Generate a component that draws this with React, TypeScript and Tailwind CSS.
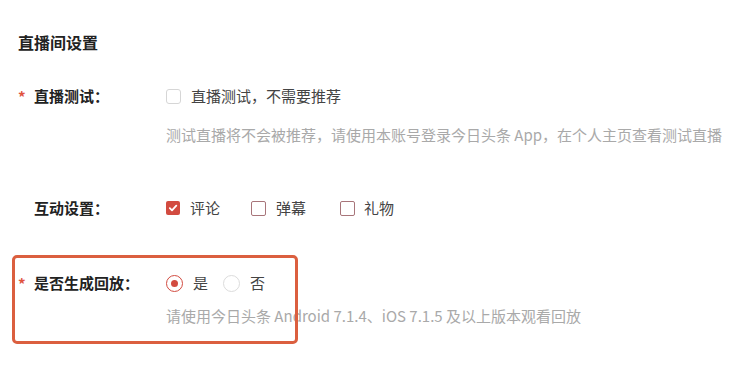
import React from 'react';

const font = { fontFamily: '"Noto Sans CJK SC", "Noto Sans", sans-serif' };

const Box = ({ checked, tone }: { checked?: boolean; tone: 'gray' | 'red' }) =>
    checked ? (
        <span className="w-[14px] h-[14px] rounded-[2px] bg-[#d24b40] flex items-center justify-center">
            <svg width="10" height="10" viewBox="0 0 10 10">
                <path d="M1.8 5.2 L4 7.3 L8.3 2.6" stroke="#fff" strokeWidth="1.8" fill="none" strokeLinecap="round" strokeLinejoin="round" />
            </svg>
        </span>
    ) : (
        <span
            className={
                tone === 'red'
                    ? 'w-[15px] h-[15px] rounded-[2px] border border-[#a8757a] bg-white'
                    : 'w-[15px] h-[15px] rounded-[3px] border border-[#d6d6d6] bg-white'
            }
        />
    );

const Radio = ({ on }: { on?: boolean }) =>
    on ? (
        <span className="w-[17px] h-[17px] rounded-full border-[1.5px] border-[#d24b40] flex items-center justify-center">
            <span className="w-[7px] h-[7px] rounded-full bg-[#d24b40]" />
        </span>
    ) : (
        <span className="w-[17px] h-[17px] rounded-full border border-[#dcdcdc]" />
    );

const Label = ({ text, required }: { text: string; required?: boolean }) => (
    <div className="w-[166px] flex items-center shrink-0">
        <span className="w-[16px] pl-[18px] box-content text-[#e0533f] text-[15px] font-bold leading-none">
            {required ? '*' : ''}
        </span>
        <span className="text-[15px] font-bold text-[#222]">{text}</span>
    </div>
);

export default function App() {
    return (
        <div className="relative w-[750px] h-[377px] bg-white overflow-hidden" style={font}>
            <div className="pt-[30px] pl-[18px] text-[16px] leading-[24px] font-semibold text-[#222]">直播间设置</div>

            <div className="mt-[30px] h-[24px] flex items-center">
                <Label text="直播测试：" required />
                <div className="flex items-center gap-[10px] text-[15px] text-[#444]">
                    <Box tone="gray" />
                    <span>直播测试，不需要推荐</span>
                </div>
            </div>
            <div className="mt-[16px] pl-[166px] text-[15px] leading-[22px] text-[#a9a9a9] whitespace-nowrap">
                测试直播将不会被推荐，请使用本账号登录今日头条 App，在个人主页查看测试直播
            </div>

            <div className="mt-[50px] h-[24px] flex items-center">
                <Label text="互动设置：" />
                <div className="flex items-center text-[15px] text-[#444]">
                    <div className="flex items-center gap-[10px] w-[85px]">
                        <Box checked tone="red" />
                        <span>评论</span>
                    </div>
                    <div className="flex items-center gap-[10px] w-[89px]">
                        <Box tone="red" />
                        <span>弹幕</span>
                    </div>
                    <div className="flex items-center gap-[9px]">
                        <Box tone="red" />
                        <span>礼物</span>
                    </div>
                </div>
            </div>

            <div className="mt-[51px] h-[24px] flex items-center">
                <Label text="是否生成回放：" required />
                <div className="flex items-center text-[15px] text-[#444]">
                    <div className="flex items-center gap-[10px] w-[57px]">
                        <Radio on />
                        <span>是</span>
                    </div>
                    <div className="flex items-center gap-[10px]">
                        <Radio />
                        <span>否</span>
                    </div>
                </div>
            </div>
            <div className="mt-[10px] pl-[166px] text-[15px] leading-[22px] text-[#a9a9a9] whitespace-nowrap">
                请使用今日头条 Android 7.1.4、iOS 7.1.5 及以上版本观看回放
            </div>

            {/* highlight frame drawn over the form */}
            <div className="absolute left-[12px] top-[255px] w-[286px] h-[89px] rounded-[5px] border-[3px] border-[#db5f3f] pointer-events-none" />
        </div>
    );
}
